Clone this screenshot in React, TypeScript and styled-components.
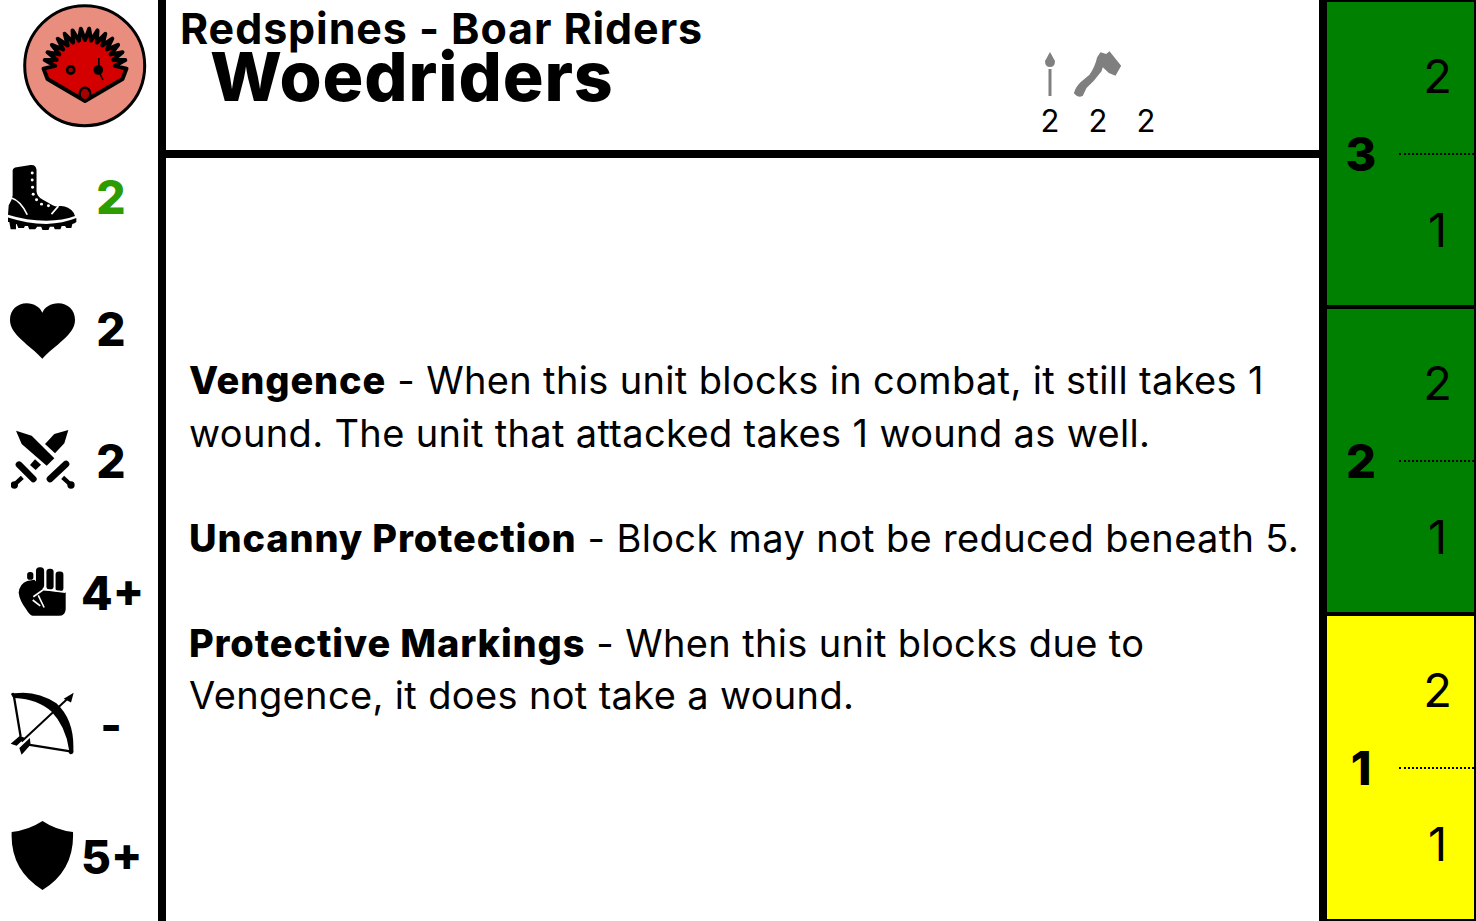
import styled, { createGlobalStyle } from 'styled-components';

const GlobalStyle = createGlobalStyle`
  html, body {
    margin: 0;
    padding: 0;
    background: #fff;
  }
  body {
    font-family: Inter, 'Liberation Sans', sans-serif;
    color: #000;
  }
`;

const spikes = (() => {
  const pts: string[] = ['47.5,79'];
  const count = 15;
  const start = 178;
  const end = 2;
  for (let i = 0; i <= count * 2; i++) {
    const deg = start + ((end - start) * i) / (count * 2);
    const r = i % 2 === 0 ? 41.5 : 30;
    const a = (deg * Math.PI) / 180;
    pts.push(`${(85 + r * Math.cos(a)).toFixed(1)},${(70 - r * Math.sin(a)).toFixed(1)}`);
  }
  return `${pts.join(' ')} 122.5,79 85,101`;
})();

function Hedgehog() {
  return (
    <svg width="124" height="124" viewBox="23 4 124 124">
      <circle cx="84.7" cy="65.7" r="60" fill="#e98e7e" stroke="#000" strokeWidth="3" />
      <polygon points={spikes} fill="#d40000" stroke="#000" strokeWidth="4" strokeLinejoin="round" />
      <circle cx="70.7" cy="70" r="3.6" fill="#a00000" stroke="#000" strokeWidth="2.6" />
      <circle cx="98.3" cy="70" r="4.8" fill="#000" />
      <path d="M98.8 58v12M100 74l3 6" stroke="#000" strokeWidth="1.6" fill="none" />
      <ellipse cx="85" cy="94" rx="5.4" ry="6.4" fill="#a40000" stroke="#000" strokeWidth="2.4" />
    </svg>
  );
}

function BootIcon() {
  return (
    <svg width="69" height="68" viewBox="24 22 208 205">
      <path d="M38 44Q40 36 50 35L92 28Q108 26 110 42L110 108Q112 124 128 132L160 150Q170 155 180 152Q205 150 222 172L226 182Q190 196 140 196Q80 196 24 178L26 150Q36 135 38 120Z" />
      <path d="M24 186Q80 204 140 206Q190 204 230 188L230 200Q225 205 218 206L215 218H200L196 212H186L182 222H165L162 214H150L146 224H128L124 214H112L106 222H88L84 212H75L72 218H55L50 206H48V222H32L28 200H24Z" />
      <path d="M33 127Q62 136 82 178M155 176L176 152" stroke="#fff" strokeWidth="5" fill="none" />
      <g fill="#fff">
        <circle cx="97" cy="52" r="4.5" />
        <circle cx="97" cy="73" r="4.5" />
        <circle cx="98" cy="95" r="4.5" />
        <circle cx="100" cy="116" r="4.5" />
        <circle cx="110" cy="133" r="4.5" />
        <circle cx="125" cy="146" r="4.5" />
        <circle cx="146" cy="151" r="4.5" />
      </g>
    </svg>
  );
}

function HeartIcon() {
  return (
    <svg width="65" height="56" viewBox="0 0 195 166">
      <path d="M97 166C60 125 0 95 0 50C0 20 22 0 50 0C72 0 90 12 97 28C104 12 122 0 145 0C173 0 195 20 195 50C195 95 134 125 97 166Z" />
    </svg>
  );
}

function SwordsIcon() {
  return (
    <svg width="64" height="62" viewBox="18 12 192 186">
      <path d="M33 20L80 35L148 103L125 125L50 60Z" />
      <path d="M190 18L178 58L150 88L120 60L148 30Z" />
      <path d="M75 123L90 106L108 122L92 138Z" />
      <path d="M42 122L85 165M135 165L183 120" stroke="#000" strokeWidth="20" strokeLinecap="round" fill="none" />
      <path d="M52 160L27 183M173 160L198 183" stroke="#000" strokeWidth="13" fill="none" />
      <circle cx="28" cy="183" r="11" />
      <circle cx="198" cy="183" r="11" />
    </svg>
  );
}

function FistIcon() {
  return (
    <svg width="49" height="51" viewBox="50 860 150 152">
      <rect x="78" y="876" width="19" height="24" rx="8" />
      <rect x="105" y="862" width="25" height="66" rx="11" />
      <rect x="137" y="866" width="22" height="64" rx="10" />
      <rect x="165" y="875" width="24" height="60" rx="10" />
      <path d="M52 940Q55 912 78 904L100 900L130 932L196 938V990Q195 1010 175 1010H95Q85 1008 75 990Q55 965 52 940Z" />
      <path d="M97 952L128 930L195 938M112 948L130 985M95 962L118 980" stroke="#fff" strokeWidth="5" fill="none" />
    </svg>
  );
}

function BowIcon() {
  return (
    <svg width="65" height="65" viewBox="30 63 196 196">
      <path d="M33 72Q38 66 44 70Q110 60 170 100Q224 150 221 240Q224 254 212 254Q204 250 208 240Q198 170 155 125Q115 88 44 84Q36 82 33 72Z" />
      <path d="M42 80L62 200M85 225L212 245" stroke="#000" strokeWidth="7" fill="none" />
      <path d="M65 215L205 85" stroke="#000" strokeWidth="6" fill="none" />
      <path d="M222 68L214 98L192 86Z" />
      <path d="M32 222L60 198L75 205L50 228Z" />
      <path d="M58 235L90 205L92 225L65 255Z" />
    </svg>
  );
}

function ShieldIcon() {
  return (
    <svg width="63" height="71" viewBox="33 450 190 212">
      <path d="M128 452Q170 480 220 485Q225 600 128 660Q30 600 35 485Q85 480 128 452Z" />
    </svg>
  );
}

function SpearIcon() {
  return (
    <svg width="16" height="44" viewBox="0 0 16 44">
      <path d="M8 0L13 9Q13 15 8 15Q3 15 3 9Z" fill="#808080" />
      <rect x="6.5" y="17" width="3" height="27" fill="#808080" />
    </svg>
  );
}

function AxeIcon() {
  return (
    <svg width="52" height="50" viewBox="160 55 155 150">
      <path
        d="M235 80L245 65L262 70L272 62L307 105L290 135L270 127L252 110L248 122L225 150L203 172L192 195Q178 204 165 188Q170 170 185 155L212 132Q228 110 235 80Z"
        fill="#7f7f7f"
      />
    </svg>
  );
}

const stats = [
  { icon: <BootIcon />, value: '2', color: '#2c9c00', shift: 4 },
  { icon: <HeartIcon />, value: '2', shift: 8 },
  { icon: <SwordsIcon />, value: '2', shift: 0 },
  { icon: <FistIcon />, value: '4+', shift: 0 },
  { icon: <BowIcon />, value: '-', shift: 0 },
  { icon: <ShieldIcon />, value: '5+', shift: 0 },
];

const weapons = [{ icon: <SpearIcon />, value: 2 }, { icon: <AxeIcon />, value: 2 }, { icon: null, value: 2 }];
const levels = [
  { level: 3, color: '#008000' },
  { level: 2, color: '#008000' },
  { level: 1, color: '#ffff00' },
];

export default function App() {
  return (
    <Card>
      <GlobalStyle />
      <SideBar>
        <LogoRow>
          <Hedgehog />
        </LogoRow>
        {stats.map((s, i) => (
          <StatRow key={i}>
            <StatIcon $shift={s.shift}>{s.icon}</StatIcon>
            <StatValue $color={s.color}>{s.value}</StatValue>
          </StatRow>
        ))}
      </SideBar>
      <Main>
        <Header>
          <Titles>
            <SubTitle>Redspines - Boar Riders</SubTitle>
            <Title>Woedriders</Title>
          </Titles>
          <Weapons>
            {weapons.map((w, i) => (
              <Weapon key={i}>
                <WeaponIcon>{w.icon}</WeaponIcon>
                <WeaponValue>{w.value}</WeaponValue>
              </Weapon>
            ))}
          </Weapons>
        </Header>
        <Rules>
          <Rule>
            <b>Vengence</b> - When this unit blocks in combat, it still takes 1 wound. The unit that attacked takes 1 wound as well.
          </Rule>
          <Rule>
            <b>Uncanny Protection</b> - Block may not be reduced beneath 5.
          </Rule>
          <Rule>
            <b>Protective Markings</b> - When this unit blocks due to Vengence, it does not take a wound.
          </Rule>
        </Rules>
      </Main>
      <Tracker>
        {levels.map(l => (
          <Level key={l.level} $bg={l.color}>
            <LevelNumber>{l.level}</LevelNumber>
            <Steps>
              <Step>2</Step>
              <Step $divided>1</Step>
            </Steps>
          </Level>
        ))}
      </Tracker>
    </Card>
  );
}

const Card = styled.div`
  display: grid;
  grid-template-columns: 166px 1fr 157px;
  width: 1476px;
  height: 921px;
  overflow: hidden;
`;

const SideBar = styled.div`
  display: grid;
  grid-template-rows: 129px repeat(6, 132px);
  border-right: 8px solid #000;
`;

const LogoRow = styled.div`
  display: flex;
  align-items: center;
  justify-content: center;
  padding: 2px 0 0 12px;
`;

const StatRow = styled.div`
  display: grid;
  grid-template-columns: 69px 60px;
  column-gap: 4px;
  align-items: center;
  padding-left: 8px;
`;

const StatIcon = styled.div<{ $shift: number }>`
  display: flex;
  align-items: center;
  justify-content: center;
  padding-top: ${p => p.$shift}px;
`;

const StatValue = styled.div<{ $color?: string }>`
  padding-top: 3px;
  font-size: 46px;
  font-weight: 800;
  line-height: 1;
  text-align: center;
  color: ${p => p.$color ?? '#000'};
`;

const Main = styled.div`
  display: flex;
  flex-direction: column;
  min-width: 0;
`;

const Header = styled.div`
  display: flex;
  justify-content: space-between;
  height: 150px;
  border-bottom: 8px solid #000;
  box-sizing: content-box;
  padding-right: 149px;
`;

const Titles = styled.div`
  padding: 6px 0 0 14px;
`;

const SubTitle = styled.div`
  font-size: 43px;
  font-weight: 700;
  line-height: 44px;
  letter-spacing: 0.9px;
`;

const Title = styled.div`
  margin: -7px 0 0 30px;
  font-size: 68px;
  font-weight: 800;
  line-height: 66px;
  letter-spacing: 0.9px;
`;

const Weapons = styled.div`
  display: flex;
  padding-top: 50px;
`;

const Weapon = styled.div`
  display: flex;
  flex-direction: column;
  align-items: center;
  width: 48px;
`;

const WeaponIcon = styled.div`
  display: flex;
  align-items: center;
  justify-content: center;
  height: 48px;
`;

const WeaponValue = styled.div`
  margin-top: 5px;
  font-size: 31px;
  line-height: 36px;
`;

const Rules = styled.div`
  flex: 1;
  display: flex;
  flex-direction: column;
  justify-content: center;
  gap: 52.5px;
  padding: 0 18px 3px 23px;
  font-size: 38px;
  line-height: 52.5px;
  letter-spacing: 0.35px;
`;

const Rule = styled.div`
  b {
    font-weight: 800;
    letter-spacing: 0.85px;
  }
`;

const Tracker = styled.div`
  display: grid;
  grid-template-rows: repeat(3, 1fr);
  background: #000;
  border-left: 6px solid #000;
`;

const Level = styled.div<{ $bg: string }>`
  display: grid;
  grid-template-columns: 72px 1fr;
  border: 2px solid #000;
  background: ${p => p.$bg};
`;

const LevelNumber = styled.div`
  display: flex;
  align-items: center;
  justify-content: center;
  padding: 0 4px 1px 0;
  font-size: 47px;
  font-weight: 800;
`;

const Steps = styled.div`
  display: grid;
  grid-template-rows: 1fr 1fr;
  margin-bottom: 2px;
`;

const Step = styled.div<{ $divided?: boolean }>`
  display: flex;
  align-items: center;
  justify-content: center;
  font-size: 47px;
  padding-left: 2px;
  ${p => (p.$divided ? 'border-top: 2px dotted #000; padding-top: 2px;' : 'padding-bottom: 3px;')}
`;
